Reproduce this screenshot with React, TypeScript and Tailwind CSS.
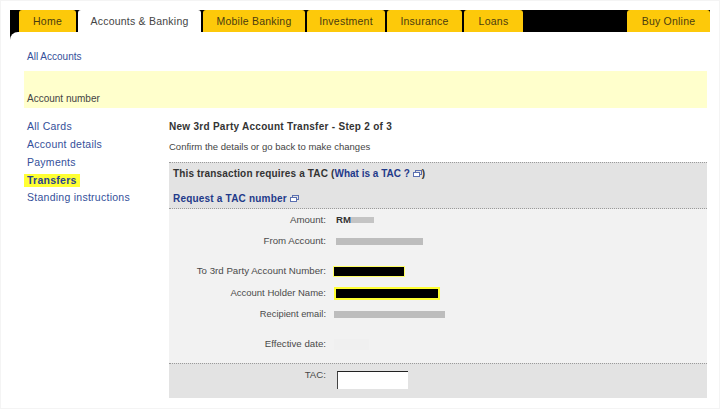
import type { ReactNode } from 'react';

const font = { fontFamily: '"Liberation Sans", Arial, sans-serif' };

function Tab({ label, className }: { label: string; className: string }) {
  return (
    <div className={`flex h-[22px] items-center justify-center rounded-t-[3px] pt-px text-[10.5px] tracking-[0.23px] ${className}`}>
      {label}
    </div>
  );
}

function YellowTab({ label, className }: { label: string; className: string }) {
  return <Tab label={label} className={`bg-[#fdc90a] text-[#4a3c10] ${className}`} />;
}

function PopupIcon() {
  return (
    <svg width="9" height="7" viewBox="0 0 9 7" className="mb-px ml-[3px] inline-block" fill="none" stroke="#5a6fb0">
      <rect x="2.5" y="0.5" width="6" height="4" />
      <rect x="0.5" y="2.5" width="6" height="4" fill="#fff" />
    </svg>
  );
}

function Row({ label, className, children }: { label: string; className: string; children?: ReactNode }) {
  return (
    <div className={`flex items-center ${className}`}>
      <div className="w-[157px] text-right text-[#4a4a4a]">{label}</div>
      <div className="relative flex-1">{children}</div>
    </div>
  );
}

export default function App() {
  const sideLinks = ['All Cards', 'Account details', 'Payments', 'Transfers', 'Standing instructions'];

  return (
    <div className="h-[409px] w-[720px] overflow-hidden bg-white pt-2.5 shadow-[inset_0_0_0_1px_#f4f4f4]" style={font}>
      {/* Top nav */}
      <div className="mx-2.5 flex h-[22px] w-[700px] bg-black pl-[9px]">
        <YellowTab label="Home" className="w-[57px]" />
        <Tab label="Accounts & Banking" className="ml-[2px] w-[123px] bg-white text-[#444]" />
        <YellowTab label="Mobile Banking" className="ml-[2px] w-[102px]" />
        <YellowTab label="Investment" className="ml-[2px] w-[78px]" />
        <YellowTab label="Insurance" className="ml-[2px] w-[75px]" />
        <YellowTab label="Loans" className="ml-[2px] w-[59px]" />
        <YellowTab label="Buy Online" className="ml-auto w-[83px]" />
      </div>

      <div className="mx-2.5 h-[8px] w-[8px] bg-black">
        <div className="h-[8px] w-[8px] rounded-tl-[8px] bg-white" />
      </div>

      {/* Account header */}
      <div className="pl-[27px] pt-[11px] text-[10px] leading-[12px] text-[#34509a]">All Accounts</div>
      <div className="ml-6 mt-[8px] flex h-[37px] w-[683px] items-end bg-[#ffffcc] pb-[3px] pl-[3px] text-[10px] leading-[12px] text-[#444]">
        Account number
      </div>

      <div className="mt-[10px] flex">
        {/* Side menu */}
        <div className="ml-6 w-[145px] text-[10.5px] tracking-[0.26px] text-[#34509a]">
          {sideLinks.map((link) => (
            <div key={link} className="flex h-[17.75px] items-center">
              {link === 'Transfers' ? (
                <span className="bg-[#ffff33] px-[3px] font-bold leading-[13px] text-[#2a4590]">{link}</span>
              ) : (
                <span className="px-[3px]">{link}</span>
              )}
            </div>
          ))}
        </div>

        {/* Main */}
        <div className="w-[538px]">
          <div className="pt-px text-[10px] font-bold leading-[16px] tracking-[0.28px] text-[#333]">
            New 3rd Party Account Transfer - Step 2 of 3
          </div>
          <div className="mt-[6px] text-[9.5px] leading-[12px] text-[#444]">
            Confirm the details or go back to make changes
          </div>

          <div className="mt-[9px] h-[47px] border-y border-dotted border-[#9a9a9a] bg-[#e3e3e3] pl-1 text-[10px] font-bold tracking-[0.15px]">
            <div className="pt-[4px] leading-[14px] text-[#333]">
              This transaction requires a TAC (<span className="tracking-normal text-[#1f3a8a]">What is a TAC ?<PopupIcon /></span>)
            </div>
            <div className="mt-[11px] leading-[14px] tracking-[0.2px] text-[#1f3a8a]">
              Request a TAC number
              <PopupIcon />
            </div>
          </div>

          <div className="h-[154px] bg-[#f2f2f2] pt-[4px] text-[9.7px] leading-[14px]">
            <Row label="Amount:" className="h-[14px]">
              <div className="flex items-center pl-[10px] font-bold text-[#333]">
                RM
                <div className="h-[6px] w-[23px] bg-[#c4c4c4]" />
              </div>
            </Row>
            <Row label="From Account:" className="mt-[7px] h-[14px]">
              <div className="ml-[10px] h-[7px] w-[87px] bg-[#bdbdbd]" />
            </Row>
            <Row label="To 3rd Party Account Number:" className="mt-[16px] h-[14px]">
              <div className="ml-[7px] h-[11px] w-[72px] border border-[#ffff66] bg-black" />
            </Row>
            <Row label="Account Holder Name:" className="mt-[8px] h-[14px] text-[9.5px]">
              <div className="ml-[8px] h-[13px] w-[106px] border-2 border-[#ffff33] bg-black" />
            </Row>
            <Row label="Recipient email:" className="mt-[7px] h-[14px] text-[9.3px]">
              <div className="ml-[8px] h-[7px] w-[111px] bg-[#bdbdbd]" />
            </Row>
            <Row label="Effective date:" className="mt-[16px] h-[14px]">
              <div className="ml-[8px] h-[11px] w-[35px] bg-[#f0f0f0]" />
            </Row>
          </div>

          <div className="h-[35px] border-t border-dotted border-[#9a9a9a] bg-[#e3e3e3] pt-[4px] text-[9.7px] leading-[14px]">
            <Row label="TAC:" className="items-start">
              <div className="ml-[11px] mt-[3px] h-[18px] w-[71px] border-l border-t border-l-[#444] border-t-[#222] bg-white" />
            </Row>
          </div>
        </div>
      </div>
    </div>
  );
}
